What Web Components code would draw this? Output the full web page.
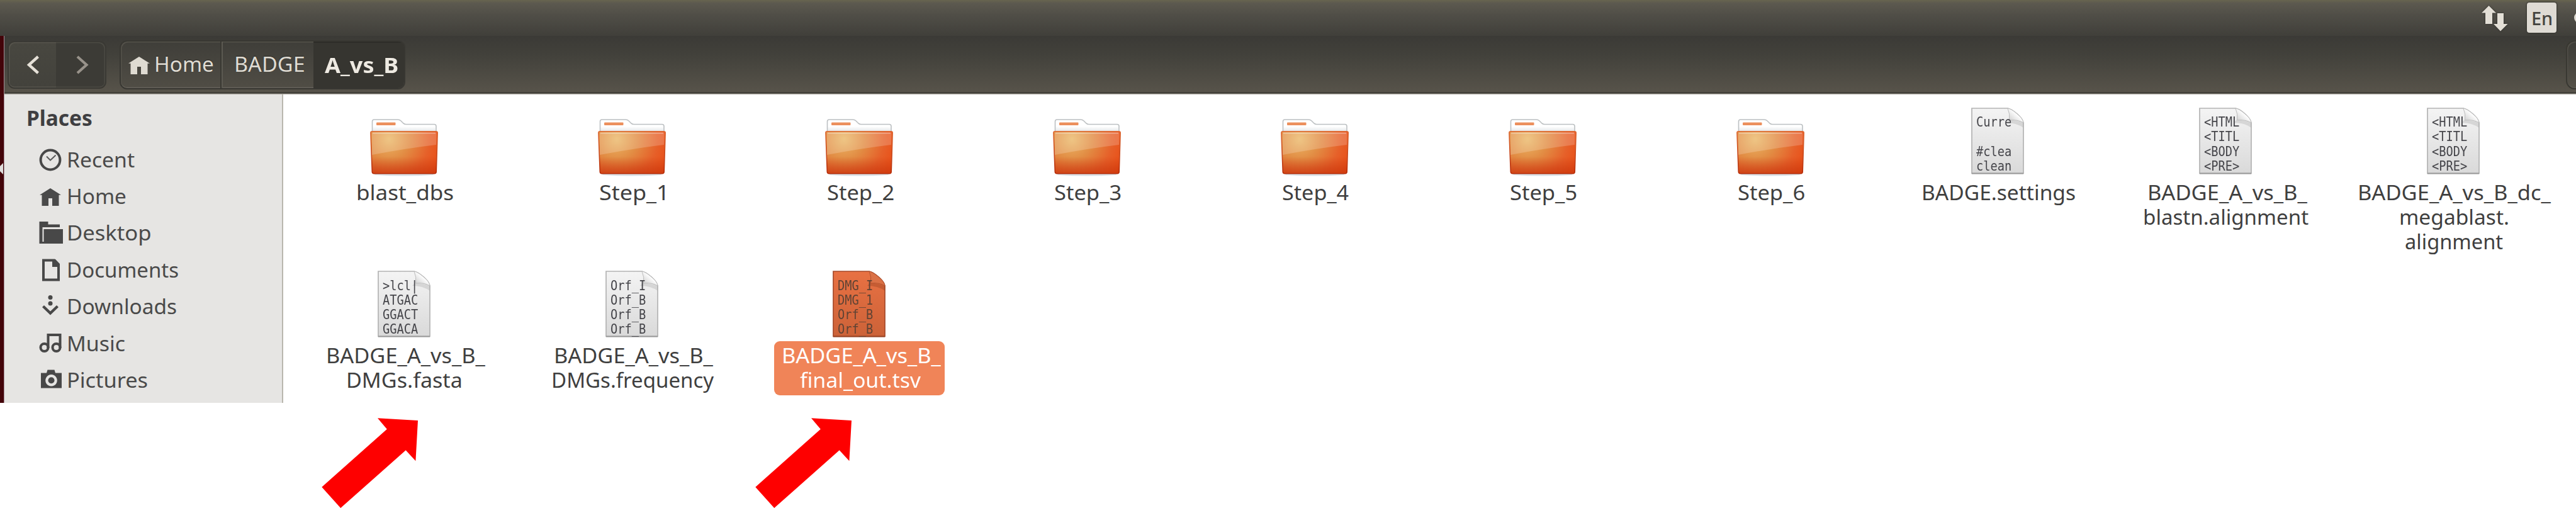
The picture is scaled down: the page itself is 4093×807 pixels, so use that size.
<!DOCTYPE html>
<html lang="en">
<head>
<meta charset="utf-8">
<title>A_vs_B</title>
<style>
html, body { margin: 0; background: #fff; }
body { width: 4093px; height: 807px; overflow: hidden; position: relative; font-family: "Noto Sans", "Open Sans", sans-serif; font-size: 33.5px; line-height: 39.25px; color: #3f3f3f; }
</style>
</head>
<body>
<file-manager></file-manager>
<script>
const define = (name, html, setup) => {
  const tpl = document.createElement('template');
  tpl.innerHTML = html;
  customElements.define(name, class extends HTMLElement {
    connectedCallback() {
      if (this.shadowRoot) return;
      const root = this.attachShadow({ mode: 'open' });
      root.appendChild(tpl.content.cloneNode(true));
      if (setup) setup(this, root);
    }
  });
};

/* A single line of text whose drawn glyphs span exactly the width given in "w". */
const pen = document.createElement('canvas').getContext('2d');
define('fit-text', `
<style>
:host { display: block; white-space: nowrap; height: 39.250px; flex: none; box-sizing: content-box; }
span { display: block; width: max-content; transform-origin: 0 0; }
</style><span><slot></slot></span>`, (host, root) => {
  const w = +host.getAttribute('w');
  const cs = getComputedStyle(host);
  pen.font = `${cs.fontWeight} ${cs.fontSize} ${cs.fontFamily}`;
  const m = pen.measureText(host.textContent);
  const ink = m.actualBoundingBoxLeft + m.actualBoundingBoxRight;
  const k = w / ink;
  host.style.width = w + 'px';
  root.querySelector('span').style.transform = `translateX(${m.actualBoundingBoxLeft * k}px) scaleX(${k})`;
  host.style.paddingLeft = 2 * (+host.getAttribute('dx') || 0) + 'px';
});

const HOME = '<path d="M17 0 34 10.8H30.5V28H20V16H14V28H3.5V10.8H0Z" fill="currentColor"/>';

define('top-panel', `
<style>
:host { display: flex; height: 57px; box-sizing: border-box; padding-right: 0; justify-content: flex-end; align-items: flex-start; background: linear-gradient(#68654f 0, #5c594f 5px, #504e47 24px, #403f3a 57px); color: #dfdbd2; }
svg { display: block; margin: 8px 30px 0 0; filter: drop-shadow(0 0 1.5px #2b2a26); }
.lang { width: 47px; height: 48px; margin: 4px 28px 0 0; border-radius: 4px; background: #dfdbd4; color: #45443f; box-shadow: 0 0 2px 1px #363530; box-sizing: border-box; padding: 0 0 0 9px; font-size: 29px; line-height: 50px; font-weight: 500; }
.edge { width: 3px; height: 48px; overflow: hidden; display: flex; align-items: center; padding-top: 8px; box-sizing: border-box; }
.edge i { flex: none; width: 18px; height: 18px; border-radius: 9px; background: #dfdbd2; }
</style>
<svg width="42" height="42" viewBox="0 0 42 42"><path d="M11.5 1 23 12.5H17V30H6V12.5H0ZM25 13H35V30H41.5L30 41.5 19 30H25Z" fill="#e3dfd6"/></svg>
<div class="lang"><fit-text w="30">En</fit-text></div><div class="edge"><i></i></div>`);

define('nav-buttons', `
<style>
:host { display: flex; width: 157px; height: 76px; box-sizing: border-box; border: 2px solid #3a3934; border-radius: 11px; overflow: hidden; flex: none; }
div { height: 72px; display: flex; align-items: center; box-sizing: border-box; }
.b { width: 75px; padding-left: 28px; background: linear-gradient(#484740, #43423c); box-shadow: inset 1.5px 1.5px #56544c, inset 0 -1.5px #56544c; border-radius: 9px 0 0 9px; }
.f { flex: 1; padding-left: 32px; background: #3c3b36; box-shadow: inset -1.5px 1.5px #4b4a43, inset 0 -1.5px #4b4a43; border-radius: 0 9px 9px 0; }
</style>
<div class="b"><svg width="22" height="32" viewBox="0 0 22 32"><path d="M18.5 3 4 16 18.5 29" fill="none" stroke="#e6e1d8" stroke-width="4.4"/></svg></div>
<div class="f"><svg width="22" height="32" viewBox="0 0 22 32"><path d="M2 3 16.5 16 2 29" fill="none" stroke="#98928a" stroke-width="4.2"/></svg></div>`);

define('path-bar', `
<style>
:host { display: flex; width: 454px; height: 78px; box-sizing: border-box; border: 2px solid #383732; border-radius: 12px; overflow: hidden; flex: none; color: #dfdbd2; text-shadow: 0 -1px 1px #2b2a26; }
div { box-sizing: border-box; height: 74px; display: flex; align-items: flex-start; background: linear-gradient(#3f3e39, #504d45); box-shadow: inset 0 1.5px #54524a, inset 0 -1.5px #64615a; }
.h { width: 160px; padding: 15.500px 0 0 12px; border-radius: 10px 0 0 10px; box-shadow: inset 1.5px 1.5px #54524a, inset 0 -1.5px #64615a; border-right: 2px solid #393832; gap: 9.500px; }
.h svg { margin-top: 8.500px; }
.m { width: 146px; padding: 15.500px 0 0 20.500px; border-left: 2px solid #5c5a52; box-sizing: border-box; }
.a { flex: 1; padding: 17.5px 0 0 18px; background: #363530; box-shadow: inset 0 2px #2d2c28; color: #eeeae2; font-weight: 700; }
</style>
<div class="h"><svg width="34" height="28" viewBox="0 0 34 28">${HOME}</svg><fit-text w="91">Home</fit-text></div>
<div class="m"><fit-text w="108">BADGE</fit-text></div>
<div class="a"><fit-text w="116">A_vs_B</fit-text></div>`);

define('tool-bar', `
<style>
:host { display: flex; height: 93px; box-sizing: border-box; padding: 7px 0 0 5px; background: linear-gradient(#3b3a36 0, #42413b 30px, #57534a 89px, #3b3a34 90px, #3b3a34 91px, #8d8981 92px, #c9c5bf 93px); }
path-bar { margin-left: 21px; }
.more { margin-left: auto; width: 16px; height: 78px; box-sizing: border-box; border: 2px solid #393832; border-right: 0; border-radius: 14px 0 0 14px; box-shadow: inset 1.5px 1.5px #514f48, inset 0 -1.5px #5c5a52; }
nav-buttons { margin-top: 1px; }
</style>
<nav-buttons></nav-buttons><path-bar></path-bar><div class="more"></div>`);

const PLACE_ICONS = {
  recent: '<circle cx="19" cy="20" r="15.4" fill="none" stroke="#484848" stroke-width="4"/><path d="m13 14.5 6 6 8.500-8" fill="none" stroke="#5a5a5a" stroke-width="2"/>',
  home: '<g transform="translate(2 7)">' + HOME + '</g>',
  desktop: '<path d="M1.500 2H15.500V6.500H34V11H6.500V34.500H1.500ZM8.500 14H39V37H1.500V34H8.500Z" fill="#484848"/>',
  documents: '<path d="M8 4.500H25.500L32 11V35.500H8Z" fill="none" stroke="#484848" stroke-width="4"/><path d="M22 3H27L34 10.500V15H22Z" fill="#484848"/>',
  downloads: '<circle cx="19" cy="5.500" r="3.500"/><circle cx="19" cy="15" r="3.500"/><path d="m7.500 19.500 11.500 11 11.500-11" fill="none" stroke="#484848" stroke-width="4.300"/>',
  music: '<g fill="none" stroke="#484848" stroke-width="4"><circle cx="9.500" cy="26" r="6"/><circle cx="28.500" cy="26" r="6"/><path d="M15.500 27V6H34.500V27"/></g>',
  pictures: '<path fill-rule="evenodd" d="M4 8.500H13L14.500 3.500H25.500L27 8.500H37V32.500H4ZM20.500 11a9.300 9.300 0 1 0 .01 0Z"/><circle cx="20.500" cy="20.300" r="5"/>'
};
define('place-item', `
<style>
:host { display: flex; height: 58.4px; padding-left: 54px; color: #4a4a4a; }
svg { flex: none; margin: 11px 8px 0 0; }
fit-text { margin-top: 11px; }
</style><svg width="40" height="40" viewBox="0 0 40 40" fill="#484848"></svg>`, (host, root) => {
  root.querySelector('svg').innerHTML = PLACE_ICONS[host.getAttribute('icon')];
  const t = document.createElement('fit-text');
  t.setAttribute('w', host.getAttribute('w'));
  t.textContent = host.getAttribute('label');
  root.appendChild(t);
});

define('places-bar', `
<style>
:host { display: block; width: 443px; height: 490px; box-sizing: border-box; background: #e6e5e3; border-right: 2px solid #b9b7ae; flex: none; overflow: hidden; }
.t { font-weight: 700; margin: 0 0 15.400px 37px; padding-top: 18px; color: #3f3f42; }
</style>
<fit-text class="t" w="102">Places</fit-text>
<place-item icon="recent" label="Recent" w="105"></place-item>
<place-item icon="home" label="Home" w="91"></place-item>
<place-item icon="desktop" label="Desktop" w="130"></place-item>
<place-item icon="documents" label="Documents" w="174"></place-item>
<place-item icon="downloads" label="Downloads" w="171"></place-item>
<place-item icon="music" label="Music" w="89"></place-item>
<place-item icon="pictures" label="Pictures" w="125"></place-item>`);

define('folder-icon', `
<style>:host { display: block; width: 108px; height: 106px; } svg { display: block; overflow: visible; }</style>
<svg width="108" height="106" viewBox="0 0 108 106">
<defs>
<radialGradient id="g" gradientUnits="userSpaceOnUse" cx="30" cy="34" r="92"><stop offset="0" stop-color="#eab868"/><stop offset=".35" stop-color="#e28d44"/><stop offset=".7" stop-color="#e66029"/><stop offset="1" stop-color="#ea4a12"/></radialGradient>
<linearGradient id="d" x2="0" y2="1"><stop offset=".6" stop-color="#c73a10" stop-opacity="0"/><stop offset="1" stop-color="#c9380f" stop-opacity=".75"/></linearGradient>
<linearGradient id="p" x2="0" y2="1"><stop offset=".5" stop-color="#fff"/><stop offset="1" stop-color="#d9dddf"/></linearGradient>
<linearGradient id="s" x2="0" y2="1"><stop offset="0" stop-color="#dd6a35"/><stop offset="1" stop-color="#b52c08"/></linearGradient>
</defs>
<path d="M5 88H103L100 91Q54 94 8 91Z" fill="#c8d2da" opacity=".7"/>
<path d="M3.500 25V6Q3.500 3 6.500 3H44Q47 3 49 5L53 9Q55 10.500 57 10.500H102Q105 10.500 105 13.500V25Z" fill="url(#p)" stroke="#bcc0c2" stroke-width="1.600"/>
<rect x="10" y="7.500" width="30.500" height="4.500" rx="1" fill="#ec8f5c"/>
<path d="M3 21.700H105Q107.300 21.700 107.200 24L105.200 86Q105 88.700 102.500 88.700H6Q3.500 88.700 3.300 86L.9 24Q.8 21.700 3 21.700Z" fill="url(#g)" />
<path d="M3 21.700H105Q107.300 21.700 107.200 24L105.200 86Q105 88.700 102.500 88.700H6Q3.500 88.700 3.300 86L.9 24Q.8 21.700 3 21.700Z" fill="url(#d)" stroke="url(#s)" stroke-width="1.600"/>
<path d="M3 23.500H105.500L105 43Q55 49 3 59Z" fill="#fff" opacity=".19"/>
<path d="M4 24.500H104" stroke="#fff" stroke-width="1.500" opacity=".4"/>
</svg>`);

define('page-icon', `
<style>
:host { display: block; width: 84px; height: 106px; position: relative; color: #45454a; font-family: "DejaVu Sans Mono", monospace; font-size: 21.500px; line-height: 23.300px; }
:host([selected]) { color: #5f4334; }
svg { position: absolute; inset: 0; overflow: visible; }
.tx { position: relative; padding: 11.500px 0 0 8px; height: 94px; width: 64px; box-sizing: border-box; }
.ln { display: block; height: 23.300px; white-space: pre; transform-origin: 0 0; transform: scaleX(.87); }
</style>
<svg width="84" height="106" viewBox="0 0 84 106">
<defs>
<linearGradient id="w" x2="0" y2="1"><stop offset="0" stop-color="#f4f4f4"/><stop offset="1" stop-color="#d9d9d9"/></linearGradient>
<linearGradient id="o" x2="0" y2="1"><stop offset="0" stop-color="#e87143"/><stop offset="1" stop-color="#cc6238"/></linearGradient>
<linearGradient id="c" x1="1" x2="0" y1="0" y2="1"><stop offset=".4" stop-color="#fff"/><stop offset="1" stop-color="#c4c4c4"/></linearGradient>
</defs>
<path class="pg" d="M1 1H58Q64 2 73 10Q82 18 83 24V104.500H1Z" fill="url(#w)" stroke="#b3b3b3" stroke-width="1.700"/>
<path class="sh" d="M55 24Q72 24 83 32V24Q80 22 60 19Z" fill="#aaa" opacity=".35"/>
<path class="fd" d="M58 1Q62 10 60.500 20Q74 18.500 83 24Q82 17 73 10Q64 2 58 1Z" fill="url(#c)" stroke="#bdbdbd" stroke-width="1"/>
<path class="bt" d="M1 104.500H83" stroke="#999" stroke-width="2"/>
</svg><div class="tx"></div>`, (host, root) => {
  host.getAttribute('text').split('~').forEach(s => {
    const ln = document.createElement('span');
    ln.className = 'ln';
    ln.textContent = s;
    root.querySelector('.tx').appendChild(ln);
  });
  if (host.hasAttribute('selected')) {
    const q = s => root.querySelector(s);
    q('.pg').setAttribute('fill', 'url(#o)'); q('.pg').setAttribute('stroke', '#a5492a');
    q('.fd').setAttribute('fill', '#da7146'); q('.fd').setAttribute('stroke', '#b4532f');
    q('.sh').setAttribute('fill', '#8f3d1e'); q('.bt').setAttribute('stroke', '#9a4524');
  }
});

define('file-item', `
<style>
:host { display: flex; flex-direction: column; align-items: center; height: 259.500px; }
.label { display: flex; flex-direction: column; align-items: center; margin-top: 6px; padding-top: 3px; height: 83px; box-sizing: content-box; }
:host([selected]) .label { background: #f08458; color: #fff; border-radius: 9px; width: 271px; margin-left: 1px; }
</style><slot></slot><div class="label"><slot name="line"></slot></div>`);

const files = [
  ['', ['blast_dbs', 152, 2]],
  ...[1, 2, 3, 4, 5, 6].map(n => ['', ['Step_' + n, n === 1 ? 103 : 105, n === 1 ? .7 : 1.7]]),
  ['Curre~ ~#clea~clean', ['BADGE.settings', 241, 2]],
  ['<HTML~<TITL~<BODY~<PRE>', ['BADGE_A_vs_B_', 251, 4], ['blastn.alignment', 261, 1.5]],
  ['<HTML~<TITL~<BODY~<PRE>', ['BADGE_A_vs_B_dc_', 304, 3], ['megablast.', 171, 1.5], ['alignment', 155, 1.5]],
  ['>lcl|~ATGAC~GGACT~GGACA', ['BADGE_A_vs_B_', 250, 4.3], ['DMGs.fasta', 180, 1.3]],
  ['Orf_I~Orf_B~Orf_B~Orf_B', ['BADGE_A_vs_B_', 250, 4.3], ['DMGs.frequency', 256, 3.3]],
  ['DMG_I~DMG_1~Orf_B~Orf_B', ['BADGE_A_vs_B_', 250, 3.7], ['final_out.tsv', 193, 2]]
];
define('file-grid', `
<style>
:host { display: grid; grid-template-columns: repeat(10, 361.800px); grid-auto-rows: 259.500px; padding: 20.500px 0 0 11px; align-content: start; flex: 1; box-sizing: border-box; }
</style>`, (host, root) => {
  files.forEach(([text, ...lines], i) => {
    const item = document.createElement('file-item');
    const sel = i === 12;
    if (sel) item.setAttribute('selected', '');
    const esc = s => s.replace(/</g, '&lt;').replace(/>/g, '&gt;');
    item.innerHTML = (text ? `<page-icon ${sel ? 'selected' : ''} text="${esc(text)}"></page-icon>` : '<folder-icon style="margin-top:16.500px;height:89.500px"></folder-icon>')
      + lines.map(([t, w, dx]) => `<fit-text slot="line" w="${w}" dx="${dx}">${t}</fit-text>`).join('');
    root.appendChild(item);
  });
});

define('red-arrow', `
<style>:host { position: absolute; display: block; width: 154px; height: 144px; } svg { display: block; }</style>
<svg width="154" height="144" viewBox="0 0 154 144"><path d="M89 1.300 153 5 149.400 69.300 133.700 52.300 30.200 144 .3 110.700 103.800 18.700Z" fill="#fe0000"/></svg>`);

define('launcher-edge', `
<style>:host { display: flex; width: 7px; height: 583px; flex: none; box-sizing: border-box; border-right: 1.500px solid #a48f97; background: #430409; padding-top: 202px; } svg { display: block; }</style>
<svg width="5" height="18" viewBox="0 0 5 18"><path d="M5 0V18L0 13V5Z" fill="#e0dedd"/></svg>`);

define('file-manager', `
<style>
:host { display: block; width: 4093px; height: 807px; }
.row { display: flex; }
.win { flex: 1; min-width: 0; }
</style>
<top-panel></top-panel>
<div class="row"><launcher-edge></launcher-edge>
<div class="win"><tool-bar></tool-bar><div class="row"><places-bar></places-bar><file-grid></file-grid></div></div></div>
<red-arrow style="left:511px;top:663px"></red-arrow>
<red-arrow style="left:1199.700px;top:663px"></red-arrow>`);
</script>
</body>
</html>
